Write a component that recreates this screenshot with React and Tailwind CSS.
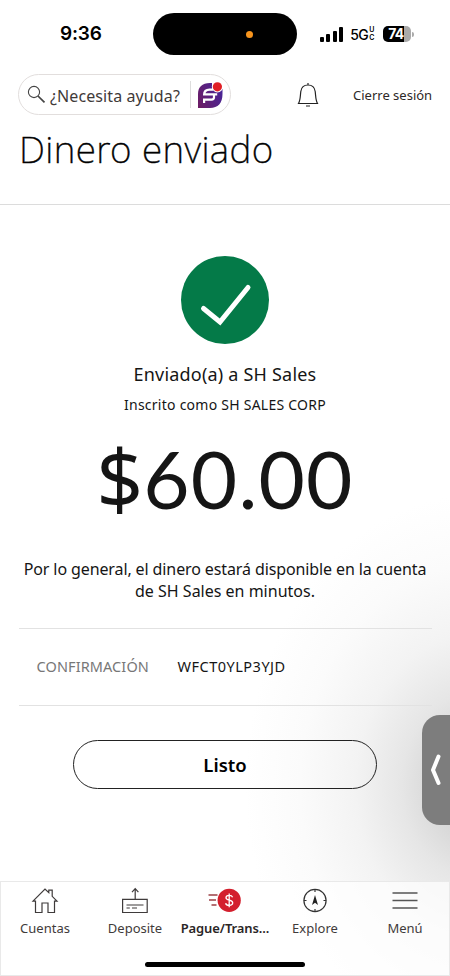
import clsx from 'clsx';

const tabs = [
  { id: 'cuentas', label: 'Cuentas', icon: HomeIcon },
  { id: 'deposite', label: 'Deposite', icon: DepositIcon },
  { id: 'pague', label: 'Pague/Trans...', icon: PayIcon, active: true },
  { id: 'explore', label: 'Explore', icon: ExploreIcon },
  { id: 'menu', label: 'Menú', icon: MenuIcon },
];

function HomeIcon() {
  return (
    <svg width="28" height="28" viewBox="0 0 28 28" fill="none" stroke="#3f3b3b" strokeWidth="1.2">
      <path d="M4.5 13.5V25.5H11V16H17V25.5H23.5V13.5M4.5 14.2H2L14 2L17.8 5.7V3.2H21.2V9.3L26 14.2H23.5" />
    </svg>
  );
}

function DepositIcon() {
  return (
    <svg width="28" height="28" viewBox="0 0 28 28" fill="none" stroke="#3f3b3b" strokeWidth="1.2">
      <path d="M1.6 12.4H26.2V25.5H1.6ZM14.2 12.4V1.8M11 5.2L14.2 1.6L17.4 5.2" />
      <path d="M5.5 18H22.5M5.5 21H8.8M11 21H16" />
    </svg>
  );
}

function PayIcon() {
  return (
    <svg width="34" height="28" viewBox="0 0 34 28" fill="none">
      <path d="M0.5 8H9.5M1 13H8M3.5 18H8.5" stroke="#9c4046" strokeWidth="1.3" />
      <circle cx="21.2" cy="13.3" r="11.6" fill="#d31f2d" />
      <path d="M24.6 10.2C24.1 8.9 22.9 8.4 21.2 8.4C19.3 8.4 18 9.3 18 10.7C18 14 24.7 12.2 24.7 15.8C24.7 17.3 23.3 18.3 21.2 18.3C19.3 18.3 18 17.6 17.6 16.2M21.2 6.4V20.3" stroke="#fff" strokeWidth="1.3" />
    </svg>
  );
}

function ExploreIcon() {
  return (
    <svg width="28" height="28" viewBox="0 0 28 28" fill="none" stroke="#333" strokeWidth="1.2">
      <circle cx="14" cy="13.5" r="11.1" />
      <path d="M14 2.4V5M14 22V24.6M2.9 13.5H5.5M22.5 13.5H25.1" />
      <path d="M14 8L17 18L14 15.8L11 18Z" fill="#222" stroke="none" />
    </svg>
  );
}

function MenuIcon() {
  return (
    <svg width="28" height="28" viewBox="0 0 28 28" stroke="#555" strokeWidth="1.4">
      <path d="M1.5 6H26.5M1.5 13.5H26.5M1.5 21H26.5" />
    </svg>
  );
}

const StatusBar = () => (
  <div className="flex h-[68px] items-center font-['Inter']">
    <span className="w-[153px] pl-[60px] text-[19px] font-semibold tracking-[-0.2px]">9:36</span>
    <div className="flex h-[42px] w-[144px] items-center rounded-full bg-black pl-[93px]">
      <span className="size-[7px] rounded-full bg-[#f7941d]" />
    </div>
    <div className="ml-[23px] flex h-[15px] items-end gap-[2.4px]">
      <span className="h-[5px] w-[4px] rounded-[1px] bg-black" />
      <span className="h-[8px] w-[4px] rounded-[1px] bg-black" />
      <span className="h-[11px] w-[4px] rounded-[1px] bg-black" />
      <span className="h-[15px] w-[4px] rounded-[1px] bg-black" />
    </div>
    <span className="ml-[7px] w-[19px] text-[14px] font-medium tracking-[-0.7px]">5G</span>
    <span className="flex w-[6px] flex-col text-[7px] leading-[8px] font-semibold">
      <span>U</span>
      <span>C</span>
    </span>
    <div className="ml-[8px] flex h-[16px] w-[28px] items-center rounded-[5px] bg-[linear-gradient(90deg,#000_76%,#aaa_76%)] pl-[5px] text-[14px] leading-[16px] font-bold tracking-[-0.8px] text-white">
      74
    </div>
    <span className="ml-px h-[5px] w-[2px] rounded-r-full bg-[#aaa]" />
  </div>
);

const FargoLogo = () => (
  <svg width="28" height="28" viewBox="0 0 28 28" fill="none">
    <defs>
      <linearGradient id="fargo" x1="0" y1="20" x2="26" y2="8" gradientUnits="userSpaceOnUse">
        <stop stopColor="#6b1c66" />
        <stop offset="1" stopColor="#47259a" />
      </linearGradient>
    </defs>
    <path d="M13 2C5 2 1 6 1 13V27H13C21 27 25.5 22 25.5 13V8H15V2Z" fill="url(#fargo)" />
    <path d="M16 8.6H12.5C9.5 8.6 7.2 9.8 7.2 13.4H20.2" stroke="#fff" strokeWidth="2.4" />
    <path d="M6 18.6H14.5C16 18.6 17 18 17 16.6V14" stroke="#fff" strokeWidth="2.2" />
    <path d="M7.1 18V22" stroke="#fff" strokeWidth="2.2" />
    <circle cx="20.4" cy="5.8" r="5.6" fill="#fff" />
    <circle cx="20.4" cy="5.8" r="4.6" fill="#e01f26" />
  </svg>
);

const Header = () => (
  <header className="h-[137px] border-b border-[#dcdcdc] pt-[6px]">
    <div className="flex h-[41px] items-center pl-[18px]">
      <div className="flex h-[41px] w-[213px] items-center rounded-full border border-[#e2dedd] pl-2">
        <svg width="19" height="19" viewBox="0 0 19 19" fill="none" stroke="#444">
          <circle cx="7" cy="7" r="5.6" strokeWidth="1.1" />
          <path d="M11 11L17.5 17.3" strokeWidth="1.7" />
        </svg>
        <span className="ml-[4px] w-[140px] pt-[2px] text-[16px] tracking-[0.1px] whitespace-nowrap text-[#3f3a39]">¿Necesita ayuda?</span>
        <span className="mr-[6px] h-[27px] w-px bg-[#ddd]" />
        <FargoLogo />
      </div>
      <svg className="ml-[66px]" width="22" height="26" viewBox="0 0 22 26" fill="none" stroke="#222" strokeWidth="1.2">
        <path d="M1.5 21.5C3.5 18 3.2 14 3.8 9.5C4.3 5.8 7 3 11 3C15 3 17.7 5.8 18.2 9.5C18.8 14 18.5 18 20.5 21.5ZM11 3V1M9 24H13" />
      </svg>
      <span className="ml-[34px] pt-[2px] text-[13px] whitespace-nowrap text-[#2d2828]">Cierre sesión</span>
    </div>
    <h1 className="mt-[6px] pl-[19px] text-[37px] leading-[56px] font-extralight tracking-[0.4px] text-black [-webkit-text-stroke:0.4px_black]">Dinero enviado</h1>
  </header>
);

const Confirmation = () => (
  <main className="flex h-[676px] flex-col items-center pt-[51px] text-[#151515]">
    <svg width="88" height="88" viewBox="0 0 88 88" fill="none">
      <circle cx="44" cy="44" r="44" fill="#047a48" />
      <path d="M22.5 52.5L39 66L67 31.5" stroke="#fff" strokeWidth="5" strokeLinecap="round" />
    </svg>
    <p className="mt-[16px] text-[18px] leading-[28px] tracking-[0.2px]">Enviado(a) a SH Sales</p>
    <p className="mt-[7px] text-[14px] leading-[20px] tracking-[0.25px]">Inscrito como SH SALES CORP</p>
    <p className="mt-[12px] flex h-[100px] items-baseline font-['Lato'] text-[80px] leading-[100px] tracking-[1.2px]">
      <span className="font-['Noto_Sans'] text-[82px] tracking-[0px]">$</span>
      <span>60.00</span>
    </p>
    <p className="mt-[31px] text-center text-[16px] leading-[22px] whitespace-nowrap">
      <span className="tracking-[-0.11px]">Por lo general, el dinero estará disponible en la cuenta</span>
      <br />
      de SH Sales en minutos.
    </p>
    <dl className="mt-[26px] flex h-[78px] w-[413px] items-center border-y border-[#e2e2e2] pl-[18px] text-[14.5px]">
      <dt className="w-[141px] tracking-[0.1px] text-[#777]">CONFIRMACIÓN</dt>
      <dd className="tracking-[0.5px]">WFCT0YLP3YJD</dd>
    </dl>
    <button className="mt-[34px] h-[49px] w-[304px] rounded-full border border-[#222] pt-px text-[18.5px] font-semibold text-black">
      Listo
    </button>
  </main>
);

const TabBar = () => (
  <nav className="h-[95px] border border-[#e9e9e9] bg-white/70">
    <div className="-mx-px flex pt-[5px]">
      {tabs.map(({ id, label, icon: Icon, active }) => (
        <div key={id} className="flex w-[90px] shrink-0 flex-col items-center">
          <Icon />
          <span
            className={clsx(
              'text-[13px] leading-[26px] whitespace-nowrap',
              active ? 'font-semibold tracking-[-0.1px] text-[#2a2626]' : 'text-[#3f3b3b]'
            )}
          >
            {label}
          </span>
        </div>
      ))}
    </div>
    <div className="mx-auto mt-[21px] h-[5px] w-[160px] rounded-full bg-black" />
  </nav>
);

const App = () => (
  <div className="relative h-[976px] w-[450px] overflow-hidden bg-white bg-[radial-gradient(ellipse_230px_290px_at_475px_785px,#c4c4c4_0%,#d4d4d4_14%,#e6e6e6_32%,#f3f3f3_52%,#fbfbfb_76%,#ffffff_100%)] font-['Noto_Sans',sans-serif] text-black">
    <StatusBar />
    <Header />
    <Confirmation />
    <TabBar />
    {/* Slide-over handle on the right edge */}
    <div className="absolute top-[715px] right-0 flex h-[110px] w-[28px] items-center rounded-l-[18px] bg-[#7d7d7d] pl-[8px]">
      <svg width="12" height="34" viewBox="0 0 12 34" fill="none" stroke="#fff" strokeWidth="4" strokeLinecap="round" strokeLinejoin="round">
        <path d="M8.5 3.5L3 17L8.5 30" />
      </svg>
    </div>
  </div>
);

export default App;
